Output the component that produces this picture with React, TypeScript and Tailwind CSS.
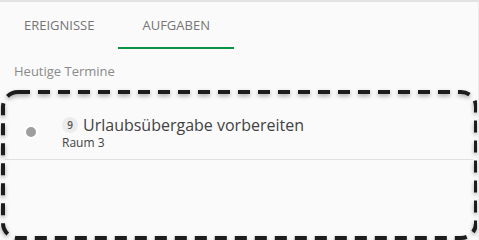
import React from 'react'

const tabs = [
    { label: 'Ereignisse', active: false },
    { label: 'Aufgaben', active: true },
]

export default function App() {
    return (
        <div className="h-[240px] overflow-hidden bg-[#fafafa] border-t-2 border-[#e2e2e2] border-r border-r-[#ececec] font-['Open_Sans',sans-serif]">
            <div className="flex h-[47px]">
                {tabs.map((t) => (
                    <div
                        key={t.label}
                        className={
                            t.active
                                ? 'flex items-center px-6 pt-[2px] border-b-2 border-[#0b9444] text-[13px] uppercase text-[#757575]'
                                : 'flex items-center px-6 pt-[2px] border-b-2 border-transparent text-[13px] uppercase text-[#757575]'
                        }
                    >
                        {t.label}
                    </div>
                ))}
            </div>

            <div className="px-[14px] pt-[13px] text-[13px] leading-[18px] text-[#8a8a8a]">Heutige Termine</div>

            <div className="relative mx-[1px] mt-[10px] h-[150px]">
                <div className="mx-1 mt-1 flex h-[70px] items-center border-b border-[#e0e0e0] pt-[15px]">
                    <div className="ml-[19px] h-[14px] w-[14px] rounded-full border-2 border-white bg-[#9e9e9e]" />
                    <div className="ml-[24px] flex flex-col">
                        <div className="flex items-center">
                            <span className="flex h-4 w-4 items-center justify-center rounded-full bg-[#ececec] text-[10px] font-semibold text-[#555]">9</span>
                            <span className="ml-[5px] text-[16px] leading-[22px] text-[#424242]">Urlaubsübergabe vorbereiten</span>
                        </div>
                        <div className="text-[12px] leading-[14px] text-[#424242]">Raum 3</div>
                    </div>
                </div>
                <svg className="pointer-events-none absolute inset-0 h-full w-full drop-shadow-[0_2px_2px_rgba(0,0,0,0.35)]" preserveAspectRatio="none">
                    <rect x="2" y="2" width="473" height="146" rx="15" ry="15" fill="none" stroke="#1c1c1c" strokeWidth="4" strokeDasharray="12 8" />
                </svg>
            </div>
        </div>
    )
}
